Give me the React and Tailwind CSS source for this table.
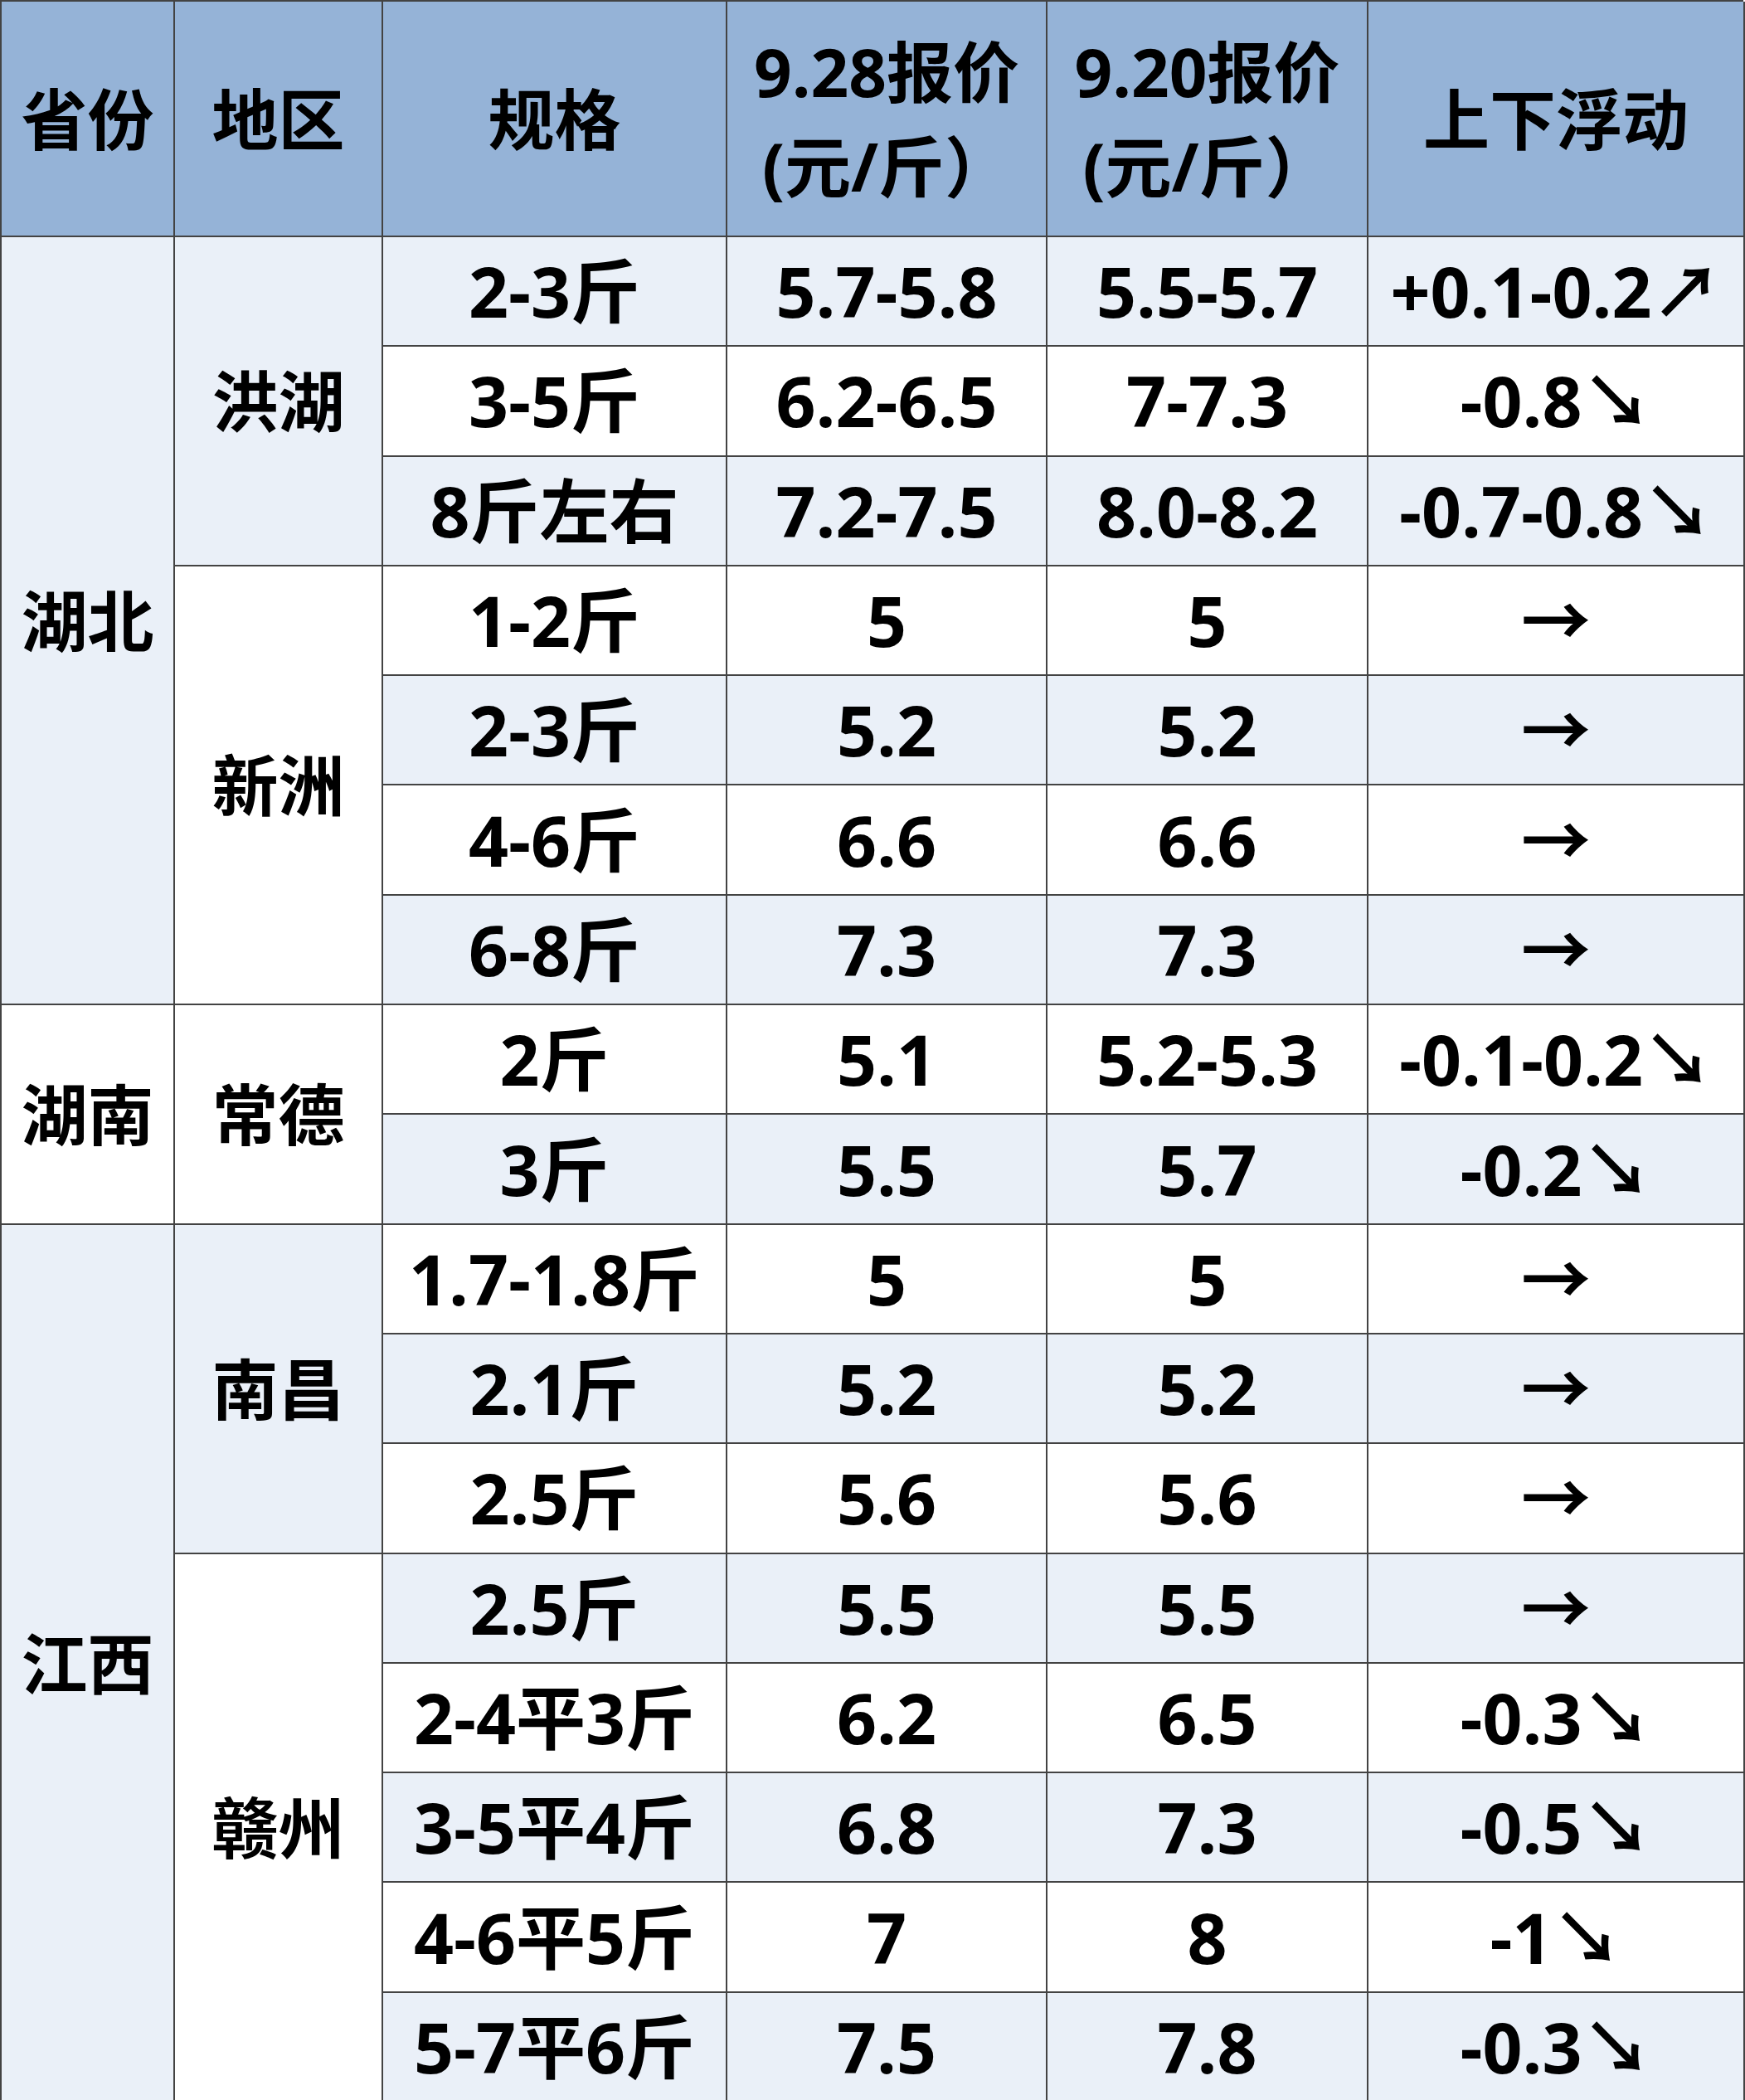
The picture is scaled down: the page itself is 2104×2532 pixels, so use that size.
import React from "react";

const L = "bg-[#eaf0f8]";
const W = "bg-white";

const rows = [
  { prov: ["湖北", 7, L], area: ["洪湖", 3, L], spec: "2-3斤", a: "5.7-5.8", b: "5.5-5.7", c: "+0.1-0.2↗" },
  { spec: "3-5斤", a: "6.2-6.5", b: "7-7.3", c: "-0.8↘" },
  { spec: "8斤左右", a: "7.2-7.5", b: "8.0-8.2", c: "-0.7-0.8↘" },
  { area: ["新洲", 4, W], spec: "1-2斤", a: "5", b: "5", c: "→" },
  { spec: "2-3斤", a: "5.2", b: "5.2", c: "→" },
  { spec: "4-6斤", a: "6.6", b: "6.6", c: "→" },
  { spec: "6-8斤", a: "7.3", b: "7.3", c: "→" },
  { prov: ["湖南", 2, W], area: ["常德", 2, W], spec: "2斤", a: "5.1", b: "5.2-5.3", c: "-0.1-0.2↘" },
  { spec: "3斤", a: "5.5", b: "5.7", c: "-0.2↘" },
  { prov: ["江西", 8, L], area: ["南昌", 3, L], spec: "1.7-1.8斤", a: "5", b: "5", c: "→" },
  { spec: "2.1斤", a: "5.2", b: "5.2", c: "→" },
  { spec: "2.5斤", a: "5.6", b: "5.6", c: "→" },
  { area: ["赣州", 5, W], spec: "2.5斤", a: "5.5", b: "5.5", c: "→" },
  { spec: "2-4平3斤", a: "6.2", b: "6.5", c: "-0.3↘" },
  { spec: "3-5平4斤", a: "6.8", b: "7.3", c: "-0.5↘" },
  { spec: "4-6平5斤", a: "7", b: "8", c: "-1↘" },
  { spec: "5-7平6斤", a: "7.5", b: "7.8", c: "-0.3↘" },
];

const SPAN = {
  2: "row-span-2",
  3: "row-span-3",
  4: "row-span-4",
  5: "row-span-5",
  7: "row-span-7",
  8: "row-span-8",
};

const cellBase =
  "flex items-center justify-center border-r-2 border-b-2 border-[#434343] text-black font-bold text-center whitespace-nowrap";

function Cell({ children, bg, span, className = "" }) {
  return (
    <div className={`${cellBase} ${bg} ${span ? SPAN[span] : ""} ${className}`}>
      {children}
    </div>
  );
}

export default function App() {
  const cells = [];
  rows.forEach((r, i) => {
    const bg = i % 2 === 0 ? L : W;
    if (r.prov) {
      cells.push(
        <Cell key={`p${i}`} bg={r.prov[2]} span={r.prov[1]} className="text-[80px]">
          {r.prov[0]}
        </Cell>
      );
    }
    if (r.area) {
      cells.push(
        <Cell key={`a${i}`} bg={r.area[2]} span={r.area[1]} className="text-[80px]">
          {r.area[0]}
        </Cell>
      );
    }
    cells.push(
      <Cell key={`s${i}`} bg={bg} className="text-[84px]">
        {r.spec}
      </Cell>
    );
    cells.push(
      <Cell key={`x${i}`} bg={bg} className="text-[84px]">
        {r.a}
      </Cell>
    );
    cells.push(
      <Cell key={`y${i}`} bg={bg} className="text-[84px]">
        {r.b}
      </Cell>
    );
    cells.push(
      <Cell key={`z${i}`} bg={bg} className="text-[84px]">
        {r.c}
      </Cell>
    );
  });

  return (
    <div
      className="w-[2104px] h-[2532px] overflow-hidden bg-white"
      style={{ fontFamily: '"Open Sans", "Noto Sans CJK SC", sans-serif' }}
    >
      <div className="grid grid-cols-[209px_251px_415px_386px_387px_454px] grid-rows-[284px_repeat(17,132.3px)] border-l-2 border-t-2 border-[#434343] w-[2102px] leading-none">
        <Cell bg="bg-[#95b3d7]" className="text-[80px]">省份</Cell>
        <Cell bg="bg-[#95b3d7]" className="text-[80px]">地区</Cell>
        <Cell bg="bg-[#95b3d7]" className="text-[80px]">规格</Cell>
        <Cell bg="bg-[#95b3d7]" className="text-[80px] flex-col leading-[114px]">
          <span>9.28报价</span>
          <span>(元/斤）</span>
        </Cell>
        <Cell bg="bg-[#95b3d7]" className="text-[80px] flex-col leading-[114px]">
          <span>9.20报价</span>
          <span>(元/斤）</span>
        </Cell>
        <Cell bg="bg-[#95b3d7]" className="text-[80px]">上下浮动</Cell>
        {cells}
      </div>
    </div>
  );
}
